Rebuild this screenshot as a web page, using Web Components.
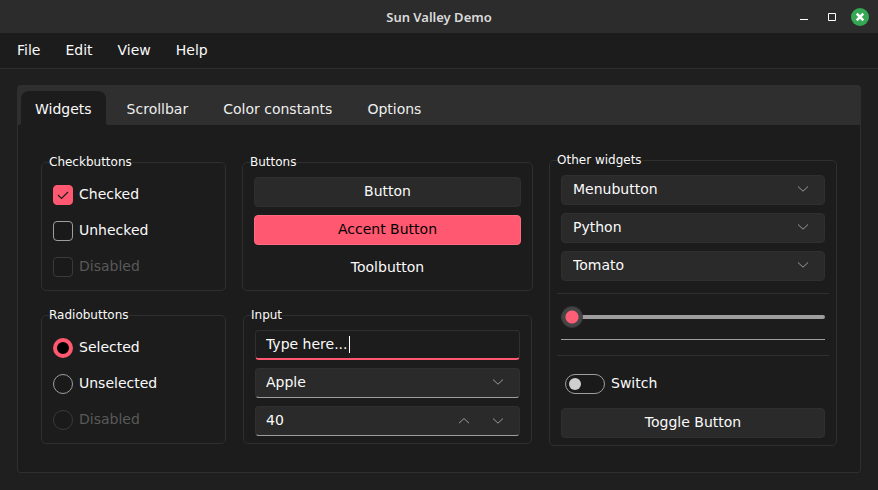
<!DOCTYPE html>
<html lang="en">
<head>
<meta charset="utf-8">
<title>Sun Valley Demo</title>
<style>
  :root {
    --window: #1f1f1f;
    --pane: #1c1c1c;
    --line: #2f2f2f;
    --fill: #2a2a2a;
    --text: #fafafa;
    --muted: #9e9e9e;
    --disabled: #595959;
    --accent: #ff5870;
  }
  body {
    margin: 0;
    background: var(--window);
    color: var(--text);
    font: 14px/18px "DejaVu Sans", sans-serif;
  }
</style>
</head>
<body>
<demo-window>
  <title-bar slot="title">Sun Valley Demo</title-bar>
  <menu-bar slot="menu">
    <menu-item>File</menu-item><menu-item>Edit</menu-item><menu-item>View</menu-item><menu-item>Help</menu-item>
  </menu-bar>
  <note-book>
    <note-tab slot="tab" active>Widgets</note-tab>
    <note-tab slot="tab">Scrollbar</note-tab>
    <note-tab slot="tab">Color constants</note-tab>
    <note-tab slot="tab">Options</note-tab>
    <widget-column size="narrow">
      <label-frame label="Checkbuttons" rows="tall">
        <option-toggle type="checkbox" checked>Checked</option-toggle>
        <option-toggle type="checkbox">Unhecked</option-toggle>
        <option-toggle type="checkbox" disabled>Disabled</option-toggle>
      </label-frame>
      <label-frame label="Radiobuttons" rows="tall">
        <option-toggle type="radio" checked>Selected</option-toggle>
        <option-toggle type="radio">Unselected</option-toggle>
        <option-toggle type="radio" disabled>Disabled</option-toggle>
      </label-frame>
    </widget-column>
    <widget-column size="wide">
      <label-frame label="Buttons">
        <push-button>Button</push-button>
        <push-button kind="accent">Accent Button</push-button>
        <push-button kind="tool">Toolbutton</push-button>
      </label-frame>
      <label-frame label="Input" inset>
        <text-entry value="Type here..."></text-entry>
        <drop-down label="Fruit" options="Apple,Banana,Cherry" kind="entry"></drop-down>
        <spin-box value="40"></spin-box>
      </label-frame>
    </widget-column>
    <widget-column>
      <label-frame label="Other widgets">
        <menu-button>Menubutton</menu-button>
        <drop-down label="Language" options="Python,C++,Java"></drop-down>
        <drop-down label="Vegetable" options="Tomato,Potato,Carrot"></drop-down>
        <value-panel></value-panel>
        <switch-toggle>Switch</switch-toggle>
        <push-button>Toggle Button</push-button>
      </label-frame>
    </widget-column>
  </note-book>
</demo-window>

<script>
const BASE = `*{box-sizing:border-box}button,input,select{font:inherit;color:inherit;margin:0;outline:0}button{cursor:default}svg{display:block}`;
const DOWN = `<svg width="12" height="8" viewBox="0 0 12 8" fill="none" stroke="#9a9a9a" aria-hidden="true"><path d="M1 1.5 6 6.2 11 1.5"/></svg>`;
const UP = `<svg width="12" height="8" viewBox="0 0 12 8" fill="none" stroke="#9a9a9a" aria-hidden="true"><path d="M1 6.2 6 1.5 11 6.2"/></svg>`;
const FIELD = `width:100%;height:30px;border:1px solid var(--line);border-radius:4px;background:var(--fill);`;

function element(name, css, html, ready) {
  customElements.define(name, class extends HTMLElement {
    constructor() {
      super();
      this.attachShadow({ mode: "open" });
    }
    connectedCallback() {
      const content = typeof html === "function" ? html(this) : html;
      this.shadowRoot.innerHTML = `<style>${BASE}${css}</style>${content}`;
      if (ready) ready(this, this.shadowRoot);
    }
  });
}

element("demo-window",
  `:host{display:flex;flex-direction:column;min-height:100vh}
   main{flex:1;display:flex;padding:16px 17px 17px}`,
  `<slot name="title"></slot><slot name="menu"></slot><main><slot></slot></main>`);

element("title-bar",
  `:host{display:block}
   header{display:grid;grid-template-columns:1fr auto 1fr;align-items:center;height:33px;padding:1px 9px 0;background:#2c2c2c}
   h1{grid-column:2;margin:0;font:600 13px/18px "Noto Sans",sans-serif;color:#dadada}
   div{display:flex;justify-content:end;align-items:center;gap:10px}
   button{display:block;padding:0;border:0;background:none}`,
  `<header><h1><slot></slot></h1><div>
    <button aria-label="Minimize"><svg width="18" height="18"><path fill="#fff" d="M5 11h8v1H5z"/></svg></button>
    <button aria-label="Maximize"><svg width="18" height="18"><path fill="none" stroke="#fff" d="M5.5 5.5h7v7h-7z"/></svg></button>
    <button aria-label="Close"><svg width="18" height="18"><circle cx="9" cy="9" r="9" fill="#35a854"/><path stroke="#fff" stroke-width="2.6" d="m5.7 5.7 6.6 6.6m0-6.6-6.6 6.6"/></svg></button>
  </div></header>`);

element("menu-bar",
  `:host{display:block}
   nav{display:flex;gap:25px;height:36px;padding:0 17px 2px;align-items:center;background:var(--pane);border-bottom:1px solid var(--line)}`,
  `<nav><slot></slot></nav>`);

element("menu-item",
  `:host{display:block} button{display:block;padding:0;border:0;background:none}`,
  `<button><slot></slot></button>`);

element("note-book",
  `:host{flex:1;display:flex;flex-direction:column;min-width:0;border-radius:4px;background:var(--line)}
   nav{display:flex;gap:7px;height:40px;padding:6px 4px 0}
   section{flex:1;display:flex;gap:16px;align-items:center;margin:0 1px 1px;padding:28px 23px 26px;background:var(--pane);border-radius:0 0 3px 3px}`,
  `<nav role="tablist"><slot name="tab"></slot></nav><section><slot></slot></section>`);

element("note-tab",
  `:host{display:block}
   button{position:relative;display:block;height:34px;padding:2px 14px 0;border:0;border-radius:8px 8px 0 0;background:none;color:#eee}
   :host([active]) button{background:var(--pane);color:var(--text)}
   :host([active]) button::before,:host([active]) button::after{content:"";position:absolute;bottom:0;width:3px;height:3px}
   :host([active]) button::before{right:100%;background:radial-gradient(circle at 0 0,transparent 3px,var(--pane) 3px)}
   :host([active]) button::after{left:100%;background:radial-gradient(circle at 100% 0,transparent 3px,var(--pane) 3px)}`,
  el => `<button role="tab" aria-selected="${el.hasAttribute("active")}"><slot></slot></button>`);

element("widget-column",
  `:host{flex:288 1 0;min-width:0;display:flex;flex-direction:column;gap:17px}
   :host([size=wide]){flex-grow:291}
   :host([size=narrow]){flex-grow:185}`,
  `<slot></slot>`);

element("label-frame",
  `:host{display:block}
   :host([inset]){margin:0 1px}
   fieldset{min-width:0;margin:0;padding:8px 11px 7px;border:1px solid var(--line);border-radius:5px}
   legend{margin-left:-4px;padding:0;font-size:12px;line-height:14px}
   div{display:grid;gap:8px}
   :host([rows=tall]) fieldset{padding-bottom:5px}
   :host([rows=tall]) div{gap:0}`,
  el => `<fieldset><legend>${el.getAttribute("label")}</legend><div><slot></slot></div></fieldset>`);

element("option-toggle",
  `:host{display:block}
   label{display:flex;align-items:center;gap:6px;height:36px}
   span{position:relative;width:20px;height:20px}
   input{appearance:none;display:block;width:20px;height:20px;border:1px solid var(--muted);border-radius:4px;background:#1a1a1a}
   input[type=radio]{border-radius:50%}
   input[type=checkbox]:checked{border-color:var(--accent);background:var(--accent)}
   input[type=radio]:checked{border:4px solid var(--accent);background:#000}
   input:disabled{border-color:#3a3a3a}
   :host([disabled]){color:var(--disabled)}
   b{font-weight:400;padding-bottom:2px}
   svg{display:none;position:absolute;inset:0;pointer-events:none}
   input[type=checkbox]:checked + svg{display:block}`,
  el => `<label><span><input type="${el.getAttribute("type")}" ${el.hasAttribute("checked") ? "checked" : ""} ${el.hasAttribute("disabled") ? "disabled" : ""}><svg width="20" height="20" fill="none" stroke="#1c1c1c" stroke-width="1.2"><path d="m5 10 3.500 3.500 6.500-6.500"/></svg></span><b><slot></slot></b></label>`);

element("push-button",
  `:host{display:block}
   button{display:block;${FIELD}padding:0 12px 2px;text-align:center}
   :host([kind=accent]) button{background:var(--accent);border-color:#ff6a7f;color:#000}
   :host([kind=tool]) button{background:none;border-color:transparent}`,
  `<button><slot></slot></button>`);

element("menu-button",
  `:host{display:block}
   button{display:flex;align-items:center;justify-content:space-between;${FIELD}padding:0 15px 2px 11px}`,
  `<button aria-haspopup="menu"><slot></slot>${DOWN}</button>`);

element("drop-down",
  `:host{display:block;position:relative}
   select{appearance:none;display:block;${FIELD}padding:0 40px 2px 11px}
   :host([kind=entry]) select{border-bottom-color:var(--muted);padding-left:10px}
   svg{position:absolute;right:16px;top:10px;pointer-events:none}`,
  el => `<select aria-label="${el.getAttribute("label")}">${el.getAttribute("options").split(",").map(o => `<option>${o}</option>`).join("")}</select>${DOWN}`);

element("text-entry",
  `:host{display:block;position:relative}
   input{display:block;${FIELD}background:var(--pane);border-bottom:2px solid var(--accent);padding:0 10px 1px;caret-color:transparent}
   i{position:absolute;top:6px;width:1px;height:17px;background:#fff}`,
  el => `<input type="text" aria-label="Text" value="${el.getAttribute("value")}"><i></i>`,
  (el, root) => {
    const input = root.querySelector("input");
    const pen = document.createElement("canvas").getContext("2d");
    pen.font = '14px "DejaVu Sans", sans-serif';
    const place = () => {
      root.querySelector("i").style.left = Math.round(12 + pen.measureText(input.value).width) + "px";
    };
    input.addEventListener("input", place);
    place();
  });

element("spin-box",
  `:host{display:block}
   div{display:flex;align-items:center;${FIELD}border-bottom-color:var(--muted);padding:0 4px 0 10px}
   input{flex:1;min-width:0;height:26px;padding:0 0 2px;border:0;background:none;appearance:textfield}
   input::-webkit-inner-spin-button{appearance:none}
   button{display:grid;place-items:center;width:34px;height:26px;padding:0;border:0;background:none}`,
  el => `<div><input type="number" aria-label="Number" value="${el.getAttribute("value")}"><button aria-label="Increase">${UP}</button><button aria-label="Decrease">${DOWN}</button></div>`,
  (el, root) => {
    const input = root.querySelector("input");
    const [up, down] = root.querySelectorAll("button");
    up.onclick = () => input.stepUp();
    down.onclick = () => input.stepDown();
  });

element("value-panel",
  `:host{display:block;margin:4px 0 7px}
   hr{height:1px;margin:0 -4px;border:0;background:var(--line)}
   input{appearance:none;display:block;width:100%;height:22px;margin:12px 0 11px;background:none}
   input::-webkit-slider-runnable-track{height:4px;border-radius:2px;background:var(--muted)}
   input::-webkit-slider-thumb{appearance:none;width:22px;height:22px;margin-top:-9px;border:1px solid #383838;border-radius:50%;background:radial-gradient(circle,#ff5f76 6px,#454545 7px)}
   div{height:1px;margin-bottom:15px;background:var(--muted)}`,
  `<hr><input type="range" aria-label="Value" min="0" max="100" value="0"><div role="progressbar" aria-label="Progress" aria-valuenow="0"></div><hr>`);

element("switch-toggle",
  `:host{display:block;padding:3px 4px 6px}
   label{display:flex;align-items:center;gap:6px;height:20px}
   input{appearance:none;display:flex;align-items:center;width:40px;height:20px;padding:0 3px;border:1px solid var(--muted);border-radius:10px;background:#1a1a1a}
   input::before{content:"";width:12px;height:12px;border-radius:50%;background:#cfcfcf}
   input:checked{justify-content:end;background:var(--accent)}
   span{padding-bottom:2px}`,
  `<label><input type="checkbox" role="switch"><span><slot></slot></span></label>`);
</script>
</body>
</html>
